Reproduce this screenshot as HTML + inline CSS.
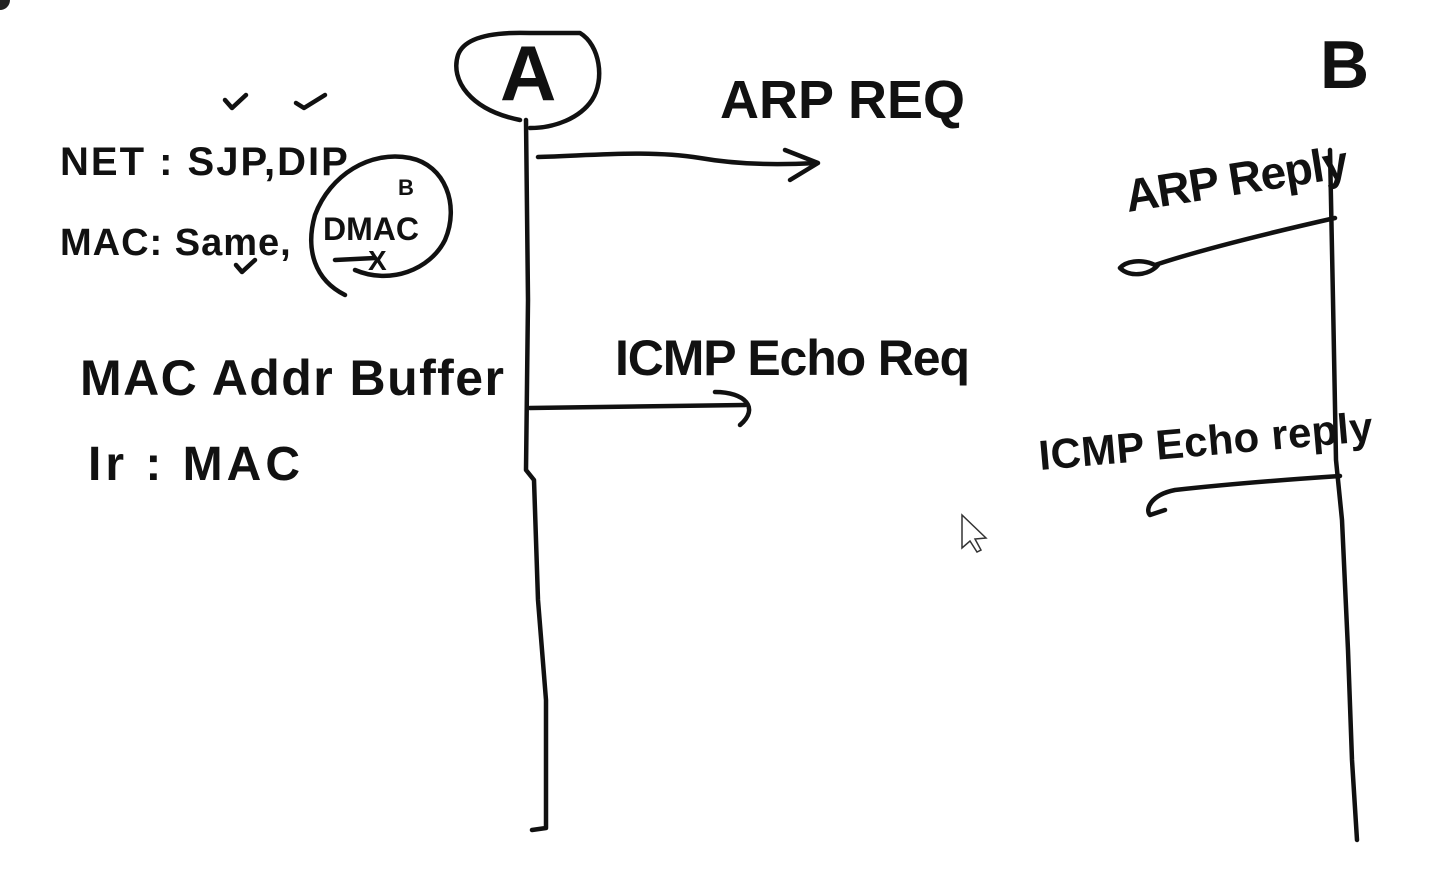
<!DOCTYPE html>
<html><head><meta charset="utf-8"><style>
html,body{margin:0;padding:0;background:#fff;width:1438px;height:870px;overflow:hidden}
svg text{font-family:"Liberation Sans Narrow","Liberation Sans",sans-serif;font-weight:bold;fill:#111}
</style></head><body>
<svg width="1438" height="870" viewBox="0 0 1438 870" xmlns="http://www.w3.org/2000/svg">
<rect width="1438" height="870" fill="#fff"/>
<circle cx="0" cy="0" r="10" fill="#222"/>
<g fill="none" stroke="#111" stroke-width="4.5" stroke-linecap="round" stroke-linejoin="round">
<path d="M526 120 L528 300 L526 470 L534 480 L538 600 L546 700 L546 828 L532 830"/>
<path d="M1330 150 L1333 300 L1336 460 L1342 520 L1348 650 L1352 760 L1357 840"/>
<path d="M520 120 C470 110 450 80 458 55 C465 35 500 32 530 33 L580 33 C600 45 605 80 592 100 C580 118 555 128 530 128"/>
<path d="M538 157 C600 155 650 150 700 158 C740 165 780 165 815 163"/>
<path d="M785 150 L818 163 L790 180"/>
<path d="M530 408 L745 405"/>
<path d="M715 392 C745 392 760 408 740 425"/>
<path d="M1335 218 C1260 235 1200 250 1155 265 C1140 258 1125 262 1120 268 C1130 278 1150 275 1158 265"/>
<path d="M1340 476 C1280 480 1220 485 1175 490 C1150 495 1145 510 1150 515 L1165 510"/>
<path d="M345 295 C315 280 305 250 315 215 C330 175 370 150 410 158 C445 165 460 205 445 240 C430 270 390 285 355 270"/>
<path d="M225 100 L232 108 L246 95"/><path d="M296 103 L304 108 L325 95"/><path d="M236 265 L242 272 L255 260"/>
<path d="M335 260 L375 258"/>
</g>
<text x="720" y="118" font-size="54" textLength="245" lengthAdjust="spacingAndGlyphs">ARP REQ</text>
<text x="500" y="100" font-size="78" font-weight="normal">A</text>
<text x="1320" y="88" font-size="68" font-weight="normal">B</text>
<text x="60" y="175" font-size="40" letter-spacing="2">NET : SJP,DIP</text>
<text x="60" y="255" font-size="38" letter-spacing="1">MAC: Same,</text>
<text x="323" y="240" font-size="32">DMAC</text>
<text x="398" y="195" font-size="22">B</text>
<text x="368" y="270" font-size="28">X</text>
<text x="80" y="395" font-size="50" letter-spacing="1" textLength="425">MAC Addr Buffer</text>
<text x="88" y="480" font-size="48" letter-spacing="4">Ir : MAC</text>
<text x="615" y="375" font-size="50" textLength="355">ICMP Echo Req</text>
<text x="1128" y="212" font-size="46" textLength="225" transform="rotate(-9 1128 212)">ARP Reply</text>
<text x="1040" y="470" font-size="42" textLength="335" transform="rotate(-5 1040 470)">ICMP Echo reply</text>
<path d="M962 515 L962 548 L970 541 L977 552 L981 550 L975 539 L986 538 Z" fill="#fff" stroke="#333" stroke-width="1.5"/>
</svg>
</body></html>
